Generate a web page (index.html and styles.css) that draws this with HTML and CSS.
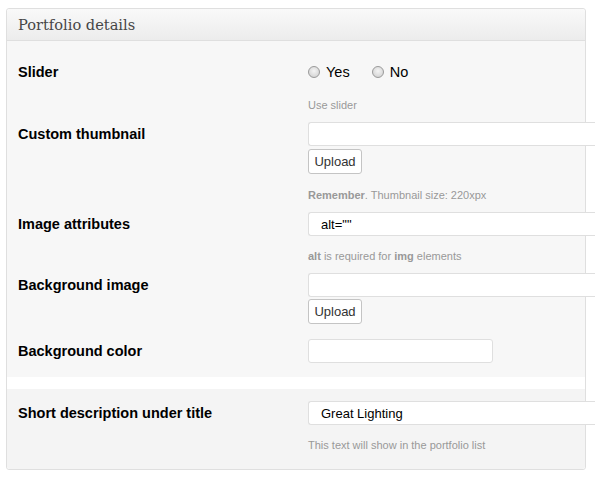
FILE: index.html
```html
<!DOCTYPE html>
<html>
<head>
<meta charset="utf-8">
<link rel="stylesheet" href="styles.css">
</head>
<body>
<div class="box">
  <div class="box-head"><h3 class="box-title">Portfolio details</h3></div>
  <div class="section section-main">
    <div class="row">
      <div class="label">Slider</div>
      <div class="field">
        <div class="radios">
          <label class="radio"><input type="radio" name="slider"><span>Yes</span></label>
          <label class="radio"><input type="radio" name="slider"><span>No</span></label>
        </div>
        <div class="hint hint-r1">Use slider</div>
      </div>
    </div>
    <div class="row">
      <div class="label">Custom thumbnail</div>
      <div class="field">
        <input class="text wide" type="text">
        <button class="upload">Upload</button>
        <div class="hint hint-after-btn"><b>Remember</b>. Thumbnail size: 220xpx</div>
      </div>
    </div>
    <div class="row">
      <div class="label">Image attributes</div>
      <div class="field">
        <input class="text wide" type="text" value='alt=""'>
        <div class="hint hint-r3"><b>alt</b> is required for <b>img</b> elements</div>
      </div>
    </div>
    <div class="row">
      <div class="label">Background image</div>
      <div class="field">
        <input class="text wide" type="text">
        <button class="upload upload-tight">Upload</button>
      </div>
    </div>
    <div class="row row-color">
      <div class="label">Background color</div>
      <div class="field">
        <input class="text narrow" type="text">
      </div>
    </div>
  </div>
  <div class="section section-desc">
    <div class="row">
      <div class="label">Short description under title</div>
      <div class="field">
        <input class="text wide" type="text" value="Great Lighting">
        <div class="hint hint-r3">This text will show in the portfolio list</div>
      </div>
    </div>
  </div>
</div>
</body>
</html>
```
FILE: styles.css
```css
html, body {
  margin: 0;
  padding: 0;
  background: #fff;
  overflow: hidden;
}
body {
  font-family: "Liberation Sans", Arial, sans-serif;
  font-size: 13px;
  color: #000;
}
.box {
  margin: 8px 0 0 6px;
  width: 580px;
  box-sizing: border-box;
  border: 1px solid #dfdfdf;
  border-radius: 3px;
  background: #fff;
}
.box-head {
  height: 31px;
  border-bottom: 1px solid #dfdfdf;
  background: linear-gradient(to bottom, #f9f9f9, #ececec);
  border-radius: 3px 3px 0 0;
  display: flex;
  align-items: center;
  padding-left: 11px;
}
.box-title {
  margin: 0;
  font-family: "DejaVu Serif", Georgia, serif;
  font-weight: normal;
  font-size: 14.6px;
  color: #464646;
}
.section {
  display: flex;
  flex-direction: column;
}
.section-main {
  background: #f7f7f7;
  padding: 19px 0 14px;
  gap: 9px;
}
.section-desc {
  margin-top: 12px;
  background: #f4f4f4;
  padding: 12px 0 16px;
  border-radius: 0 0 3px 3px;
}
.row {
  display: flex;
  align-items: flex-start;
}
.row-color {
  margin-top: 6px;
}
.label {
  width: 301px;
  padding-left: 11px;
  box-sizing: border-box;
  flex: none;
  font-weight: bold;
  font-size: 14.5px;
  line-height: 24px;
  color: #000;
}
.field {
  display: flex;
  flex-direction: column;
  align-items: flex-start;
}
.radios {
  display: flex;
  height: 24px;
  align-items: center;
  gap: 22px;
}
.radio {
  display: flex;
  align-items: center;
  font-size: 14.5px;
  color: #000;
}
.radio input {
  -webkit-appearance: none;
  appearance: none;
  width: 12px;
  height: 12px;
  margin: 0 6px 0 0;
  border: 1px solid #9a9a9a;
  border-radius: 50%;
  background: radial-gradient(circle at 50% 40%, #f4f4f4 0%, #d8d8d8 70%, #c8c8c8 100%);
  box-sizing: border-box;
}
.hint {
  font-size: 11px;
  line-height: 16px;
  color: #999;
}
.hint b {
  font-weight: bold;
}
.hint-r1 {
  margin-top: 13px;
}
.hint-after-btn {
  margin-top: 13px;
}
.hint-r3 {
  margin-top: 12px;
}
.text {
  height: 24px;
  box-sizing: border-box;
  border: 1px solid #dfdfdf;
  border-radius: 3px;
  background: #fff;
  padding: 0 12px;
  font-family: "Liberation Sans", Arial, sans-serif;
  font-size: 13px;
  color: #000;
  margin: 0;
  outline: none;
}
.wide {
  width: 287px;
  border-right-width: 0;
  border-radius: 3px 0 0 3px;
}
.narrow {
  width: 185px;
}
.upload {
  margin-top: 3px;
  width: 54px;
  height: 25px;
  box-sizing: border-box;
  border: 1px solid #c4c4c4;
  border-radius: 3px;
  background: #fff;
  font-family: "Liberation Sans", Arial, sans-serif;
  font-size: 13px;
  color: #333;
  padding: 0;
}
.upload-tight {
  margin-top: 2px;
}
```
